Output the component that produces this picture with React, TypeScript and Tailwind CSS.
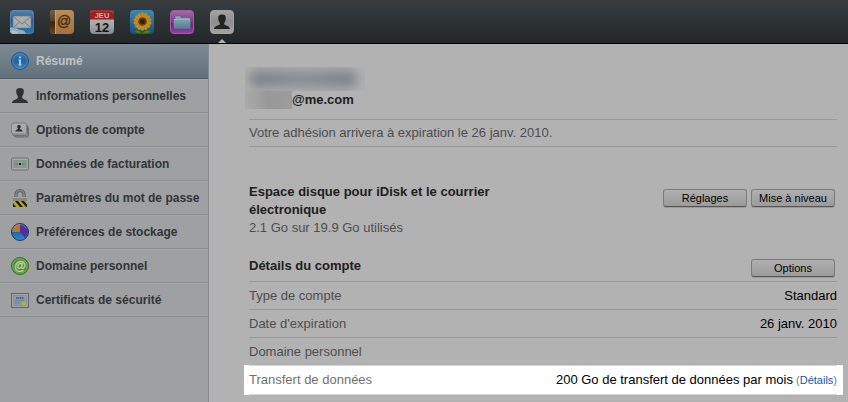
import type { ReactNode } from 'react';

interface Item {
  label: string;
  icon: ReactNode;
}

const MailIcon = () => (
  <svg viewBox="0 0 24 24" className="size-6">
    <defs>
      <linearGradient id="mail" x2="0" y2="1">
        <stop offset="0" stopColor="#5583a8" />
        <stop offset=".5" stopColor="#245b9c" />
        <stop offset="1" stopColor="#2877ae" />
      </linearGradient>
      <clipPath id="mailClip">
        <rect width="24" height="24" rx="4" />
      </clipPath>
    </defs>
    <g clipPath="url(#mailClip)">
      <rect width="24" height="24" fill="url(#mail)" />
      <path d="M0 18q3-2 6 0t5 2q4 0 5 4H0z" fill="#8fafc3" />
      <path d="M0 21q4-2 9 3H0z" fill="#b7c3c9" />
    </g>
    <rect x=".5" y=".5" width="23" height="23" rx="3.5" fill="none" stroke="#7d9cb2" strokeOpacity=".4" />
    <rect x="3" y="6" width="18" height="12" rx="1" fill="#adadab" stroke="#6f7a84" strokeWidth=".6" />
    <path d="M3.5 6.5 12 14l8.500-7.500M3.500 17.500l6-5.500M20.500 17.500l-6-5.500" fill="none" stroke="#686c70" strokeWidth=".8" />
  </svg>
);

const ContactsIcon = () => (
  <svg viewBox="0 0 24 24" className="size-6">
    <defs>
      <linearGradient id="book" x2="0" y2="1">
        <stop offset="0" stopColor="#b88e5b" />
        <stop offset="1" stopColor="#a6703a" />
      </linearGradient>
      <linearGradient id="spine" x2="0" y2="1">
        <stop offset="0" stopColor="#746044" />
        <stop offset=".45" stopColor="#594020" />
        <stop offset=".5" stopColor="#38240d" />
        <stop offset="1" stopColor="#6d461c" />
      </linearGradient>
    </defs>
    <rect width="24" height="24" rx="4" fill="url(#book)" />
    <path d="M5 0H4a4 4 0 0 0-4 4v16a4 4 0 0 0 4 4h1z" fill="url(#spine)" />
    <path d="M5.500 0v24" stroke="#c3a270" />
    <text x="14" y="16" textAnchor="middle" fontSize="14" fill="#4c2c13" stroke="#4c2c13" strokeWidth=".4" className="font-['Liberation_Sans',sans-serif]">
      @
    </text>
  </svg>
);

const CalendarIcon = () => (
  <svg viewBox="0 0 24 24" className="size-6 font-['Liberation_Sans',sans-serif]">
    <defs>
      <linearGradient id="page" x2="0" y2="1">
        <stop offset="0" stopColor="#b4b4b4" />
        <stop offset=".6" stopColor="#a9a9ab" />
        <stop offset="1" stopColor="#88888b" />
      </linearGradient>
    </defs>
    <rect width="24" height="24" rx="4" fill="url(#page)" />
    <path d="M0 9.500V4a4 4 0 0 1 4-4h16a4 4 0 0 1 4 4v5.500z" fill="#9b2024" />
    <path d="M1 3a4 4 0 0 1 3-2h16a4 4 0 0 1 3 2" fill="none" stroke="#b64c4e" strokeWidth=".8" />
    <text x="12" y="8" textAnchor="middle" fontSize="7.500" fontWeight="700" fill="#cbb3b3">
      JEU
    </text>
    <text x="12" y="21.500" textAnchor="middle" fontSize="13" fontWeight="700" fill="#151515">
      12
    </text>
  </svg>
);

const petals = Array.from({ length: 14 }, (_, i) => (i * 360) / 14);

const GalleryIcon = () => (
  <svg viewBox="0 0 24 24" className="size-6">
    <defs>
      <linearGradient id="sky" x2="0" y2="1">
        <stop offset="0" stopColor="#3b8cac" />
        <stop offset="1" stopColor="#174b8c" />
      </linearGradient>
    </defs>
    <rect width="24" height="24" rx="4" fill="url(#sky)" />
    <path d="M12 18v6" stroke="#285a16" strokeWidth="2" />
    <path d="M12 23.500q-6 .5-9-2.500 6-2.500 9 2 4-5 10-2-3 3.500-10 2.500" fill="#4d801e" stroke="#234c14" strokeWidth=".5" />
    {petals.map((angle) => (
      <ellipse key={angle} cx="12.500" cy="5.500" rx="1.800" ry="3.200" fill="#c08f25" stroke="#a87318" strokeWidth=".4" transform={`rotate(${angle} 12.500 11.500)`} />
    ))}
    <circle cx="12.500" cy="11.500" r="4.300" fill="#743c10" />
    <circle cx="12.500" cy="11.500" r="2.500" fill="#2c211a" />
  </svg>
);

const DiskIcon = () => (
  <svg viewBox="0 0 24 24" className="size-6">
    <defs>
      <linearGradient id="purple" x2="0" y2="1">
        <stop offset="0" stopColor="#a46ba8" />
        <stop offset=".5" stopColor="#82368a" />
        <stop offset=".6" stopColor="#72207e" />
        <stop offset="1" stopColor="#a13aae" />
      </linearGradient>
      <linearGradient id="folder" x2="0" y2="1">
        <stop offset="0" stopColor="#8facbc" />
        <stop offset="1" stopColor="#587b93" />
      </linearGradient>
    </defs>
    <rect x=".5" y=".5" width="23" height="23" rx="3.500" fill="url(#purple)" stroke="#98609f" />
    <path d="M5 7q0-1 1-1h4q1 0 1 1.500h8q1 0 1 1V9h.5v9q0 1-1 1h-15q-1 0-1-1V9H5z" fill="url(#folder)" stroke="#4a4d75" strokeWidth=".4" />
    <path d="M4 9.500h16" stroke="#a6bdc8" strokeWidth=".8" />
  </svg>
);

const AccountIcon = () => (
  <svg viewBox="0 0 24 24" className="size-6">
    <defs>
      <linearGradient id="silver" x2="0" y2="1">
        <stop offset="0" stopColor="#a3a3a3" />
        <stop offset=".5" stopColor="#8d8d8d" />
        <stop offset="1" stopColor="#a5a5a5" />
      </linearGradient>
    </defs>
    <rect x=".5" y=".5" width="23" height="23" rx="3.500" fill="url(#silver)" stroke="#a2a2a2" />
    <path d="M12 4.500c-3 0-4 1.600-3.800 4 .1 2.200.9 3.500 1.600 4.500v1.200c-.6 1.300-5.500 1.300-5.800 4.800h16c-.3-3.500-5.200-3.500-5.800-4.800V13c.7-1 1.500-2.300 1.600-4.500.2-2.400-.8-4-3.800-4" fill="#242424" />
  </svg>
);

const InfoIcon = () => (
  <svg viewBox="0 0 18 18" className="size-[18px]">
    <defs>
      <linearGradient id="info" x2="0" y2="1">
        <stop offset="0" stopColor="#397fbd" />
        <stop offset=".5" stopColor="#24639f" />
        <stop offset="1" stopColor="#3989bd" />
      </linearGradient>
    </defs>
    <circle cx="9" cy="9" r="8.500" fill="url(#info)" stroke="#1d548f" />
    <circle cx="9" cy="9" r="7.300" fill="none" stroke="#6e9fc7" strokeOpacity=".6" strokeWidth=".8" />
    <path d="M8 4.500h2v1.800H8zM7.500 7.500H10v5h.7v1H7.400v-1H8v-4h-.5z" fill="#c0c6cd" />
  </svg>
);

const PersonIcon = () => (
  <svg viewBox="0 0 18 18" className="size-[18px]">
    <path d="M9 1C6 1 5 2.300 5.200 4.500c.1 2.200.8 3.600 1.600 4.500v2c-.8 1.800-5.500 1.300-5.800 5h16c-.3-3.700-5-3.200-5.800-5V9c.8-.9 1.500-2.300 1.600-4.500C13 2.300 12 1 9 1" fill="#303030" />
  </svg>
);

const CardsIcon = () => (
  <svg viewBox="0 0 18 18" className="size-[18px]">
    <rect x="3" y="5" width="14.500" height="11" rx="2" fill="#8e8e8e" stroke="#5d5d5d" strokeWidth=".8" />
    <rect x="1.500" y="3.500" width="15" height="11" rx="2" fill="#a0a0a0" stroke="#656565" strokeWidth=".8" />
    <rect x=".5" y="2" width="15" height="11" rx="2" fill="#aaa" stroke="#737373" strokeWidth=".8" />
    <path d="M8 4c-1.700 0-2 1-1.700 2.300.1.700.5 1.100.8 1.400-.2 1-2.800.8-2.800 2.800h7.400c0-2-2.600-1.800-2.800-2.800.3-.3.700-.7.800-1.400C10 5 9.700 4 8 4" fill="#303030" />
  </svg>
);

const BillIcon = () => (
  <svg viewBox="0 0 18 18" className="size-[18px]">
    <rect x=".5" y="3" width="17" height="12" rx="1.500" fill="#a7aaa7" stroke="#5d625f" strokeWidth=".8" />
    <rect x="2" y="5" width="14" height="8" fill="#83998b" />
    <path d="M3.500 8v2M14.500 8v2" stroke="#6f8778" />
    <circle cx="9" cy="9" r="2.300" fill="#a8b5aa" />
    <circle cx="9" cy="9" r="1.300" fill="#171f1a" />
    <circle cx="6" cy="9" r=".5" fill="#29352d" />
    <circle cx="12" cy="9" r=".5" fill="#29352d" />
  </svg>
);

const LockIcon = () => (
  <svg viewBox="0 0 18 18" className="size-[18px]">
    <path d="M5 11V5.500a4 4 0 0 1 8 0V11" fill="none" stroke="#4b4b4b" strokeWidth="3" />
    <path d="M5 11V5.500a4 4 0 0 1 8 0V11" fill="none" stroke="#8c8c8c" strokeWidth="1.600" />
    <rect x="2" y="8" width="14" height="10" fill="#878787" />
    <rect x="2" y="12" width="14" height="6" fill="#1b1a14" />
    <path d="M2 12h2l5 6H5l-3-4zM7 12h3l5 6h-3zM13 12h3v3.500z" fill="#b7a916" />
    <path d="M2 8.500h14" stroke="#a5a5a5" />
  </svg>
);

const PieIcon = () => (
  <svg viewBox="0 0 18 18" className="size-[18px]">
    <defs>
      <linearGradient id="pie" x2="0" y2="1">
        <stop offset=".4" stopColor="#1c5fa5" />
        <stop offset="1" stopColor="#2a8cc2" />
      </linearGradient>
    </defs>
    <circle cx="9" cy="9" r="8.500" fill="url(#pie)" stroke="#1e3866" />
    <path d="M9 9V1a8 8 0 0 1 5 14z" fill="#51309a" />
    <path d="M9 9H1a8 8 0 0 1 8-8z" fill="#b17834" />
    <path d="M3 5Q5 1.500 9 1.500T15 5" fill="none" stroke="#af9caf" strokeOpacity=".6" strokeWidth=".8" />
  </svg>
);

const DomainIcon = () => (
  <svg viewBox="0 0 18 18" className="size-[18px]">
    <circle cx="9" cy="9" r="8.500" fill="#4e922d" stroke="#376d23" />
    <circle cx="9" cy="9" r="7.300" fill="none" stroke="#8eb574" strokeWidth=".8" />
    <text x="9" y="12.500" textAnchor="middle" fontSize="12" fill="#c0cfb9" stroke="#c0cfb9" strokeWidth=".3" className="font-['Liberation_Sans',sans-serif]">
      @
    </text>
  </svg>
);

const CertificateIcon = () => (
  <svg viewBox="0 0 18 18" className="size-[18px]">
    <rect x=".5" y="2.500" width="17" height="14" fill="#a6a6a6" stroke="#626466" />
    <rect x="2.500" y="4.500" width="13" height="10" fill="#8c9cac" stroke="#778696" strokeWidth=".6" />
    <path d="M5 7h8" stroke="#445568" strokeWidth="1.300" strokeDasharray="1.500 .5" />
    <path d="M4 9.700h9M4 12h5" stroke="#59697a" strokeWidth=".8" strokeDasharray="2 .6" />
    <circle cx="13" cy="12.500" r="2" fill="#bab51d" />
  </svg>
);

const apps: Item[] = [
  { label: 'Mail', icon: <MailIcon /> },
  { label: 'Contacts', icon: <ContactsIcon /> },
  { label: 'Calendrier', icon: <CalendarIcon /> },
  { label: 'Galerie', icon: <GalleryIcon /> },
  { label: 'iDisk', icon: <DiskIcon /> },
  { label: 'Compte', icon: <AccountIcon /> },
];

const sections: Item[] = [
  { label: 'Résumé', icon: <InfoIcon /> },
  { label: 'Informations personnelles', icon: <PersonIcon /> },
  { label: 'Options de compte', icon: <CardsIcon /> },
  { label: 'Données de facturation', icon: <BillIcon /> },
  { label: 'Paramètres du mot de passe', icon: <LockIcon /> },
  { label: 'Préférences de stockage', icon: <PieIcon /> },
  { label: 'Domaine personnel', icon: <DomainIcon /> },
  { label: 'Certificats de sécurité', icon: <CertificateIcon /> },
];

const details = [
  { label: 'Type de compte', value: 'Standard' },
  { label: "Date d'expiration", value: '26 janv. 2010' },
  { label: 'Domaine personnel', value: '' },
  { label: 'Transfert de données', value: '200 Go de transfert de données par mois', link: 'Détails' },
];

function PushButton({ children }: { children: string }) {
  return (
    <button
      type="button"
      className="h-[18px] w-[84px] rounded-[3px] border border-[#7c7c7c] border-b-[#555] bg-linear-to-b from-[#b0b0b0] to-[#9b9b9b] text-[11px] leading-4 whitespace-nowrap text-black shadow-[0_1px_0_#999]"
    >
      {children}
    </button>
  );
}

export default function App() {
  return (
    <div className="flex min-h-screen flex-col bg-[#b2b2b2] font-['Liberation_Sans',Arial,sans-serif] text-[13px] leading-[18px]">
      {/* App switcher */}
      <header className="flex h-11 shrink-0 gap-4 border-t-2 border-b border-t-[#3b3b3b] border-b-black bg-linear-to-b from-[#363c40] to-[#23272a] px-2.5 pt-2">
        {apps.map((app) => (
          <a key={app.label} href="#" aria-label={app.label} className="relative size-6">
            {app.icon}
            {app.label === 'Compte' && (
              <svg viewBox="0 0 8 4" className="absolute top-[29px] left-2 h-1 w-2">
                <path d="M0 4 4 0l4 4z" fill="#b2b2b2" />
              </svg>
            )}
          </a>
        ))}
      </header>

      <div className="flex grow">
        {/* Sidebar */}
        <nav className="w-[209px] shrink-0 border-r border-[#858b8e] bg-[#9fa0a2]">
          {sections.map((section, index) => (
            <a
              key={section.label}
              href="#"
              className={`flex items-center gap-[7px] border-b pl-[11px] text-[12px] font-bold whitespace-nowrap ${
                index === 0
                  ? 'h-[35px] border-[#4c5b65] bg-linear-to-b from-[#7f8b94] to-[#61717b] text-[#bfc3c6]'
                  : 'h-[34px] border-[#8b8f91] text-[#303538] shadow-[inset_0_1px_0_#a7a8aa]'
              }`}
            >
              {section.icon}
              {section.label}
            </a>
          ))}
        </nav>

        {/* Account summary */}
        <main className="min-w-0 grow pt-[23px] pr-[11px] pb-2 pl-10 text-[#4d4d4d]">
          <div aria-hidden="true" className="-ml-1 h-6 w-[120px] overflow-hidden bg-[#afb0b0] p-1">
            <div className="h-4 w-[108px] rounded-lg bg-linear-to-r from-[#67727b] via-[#7c868d] to-[#68737b] opacity-80 blur-[6px]" />
          </div>
          <div className="-ml-1 flex h-[18px] items-center font-bold text-[#202020]">
            <span aria-hidden="true" className="h-[18px] w-[47px] bg-linear-to-r from-[#aaa] via-[#989898] to-[#9c9c9c]" />
            @me.com
          </div>
          <p className="mt-2.5 border-y border-[#999] py-1">
            Votre adhésion arrivera à expiration le 26 janv. 2010.
          </p>

          <section className="mt-9 flex items-start justify-between">
            <div className="w-[260px]">
              <h2 className="font-bold text-[#202020]">Espace disque pour iDisk et le courrier électronique</h2>
              <p>2.1 Go sur 19.9 Go utilisés</p>
            </div>
            <div className="mt-1.5 mr-0.5 flex gap-1">
              <PushButton>Réglages</PushButton>
              <PushButton>Mise à niveau</PushButton>
            </div>
          </section>

          <section className="mt-5">
            <div className="flex h-6 items-start justify-between">
              <h2 className="font-bold text-[#202020]">Détails du compte</h2>
              <div className="mt-0.5 mr-0.5 flex">
                <PushButton>Options</PushButton>
              </div>
            </div>
            <div className="-mr-1.5 -ml-[5px]">
              <table className="w-full border-collapse">
                <tbody>
                  {details.map((row) => (
                    <tr key={row.label} className={row.link ? 'bg-white text-[#707070]' : ''}>
                      <th scope="row" className="p-0 pl-[5px] text-left font-normal">
                        <div className={`border-t pt-[5px] ${row.link ? 'h-[30px] border-b border-[#d5d5d5]' : 'h-7 border-[#999]'}`}>
                          {row.label}
                        </div>
                      </th>
                      <td className="p-0 pr-1.5 text-right text-black">
                        <div className={`border-t pt-[5px] ${row.link ? 'h-[30px] border-b border-[#d5d5d5]' : 'h-7 border-[#999]'}`}>
                          {row.value}
                          {row.link && (
                            <span className="text-[11px] text-[#777]">
                              {' '}
                              (<a href="#" className="text-[#1256b0]">{row.link}</a>)
                            </span>
                          )}
                        </div>
                      </td>
                    </tr>
                  ))}
                </tbody>
              </table>
            </div>
          </section>
        </main>
      </div>
    </div>
  );
}
